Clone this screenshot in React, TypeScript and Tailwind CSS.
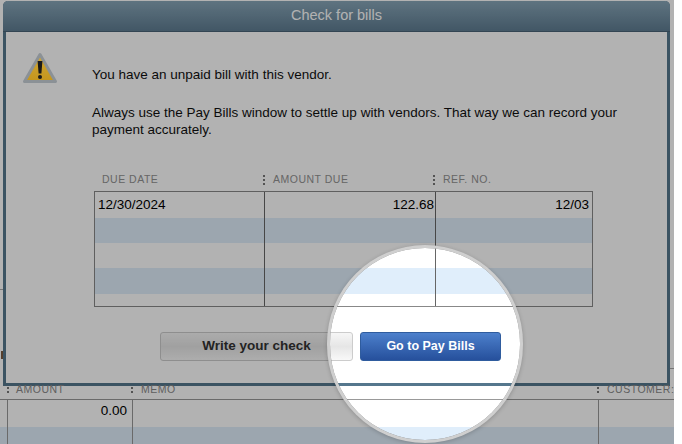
const font = { fontFamily: '"Liberation Sans", Arial, sans-serif' };

function WarningIcon() {
  return (
    <svg width="36" height="34" viewBox="0 0 36 34" className="block relative z-10">
      <defs>
        <linearGradient id="wg" x1="0" y1="0" x2="0" y2="1">
          <stop offset="0" stopColor="#cfa83a" />
          <stop offset="1" stopColor="#c4951c" />
        </linearGradient>
      </defs>
      <path d="M18 2.5 L33.5 29.5 H2.5 Z" fill="url(#wg)" stroke="#8b9196" strokeWidth="3" strokeLinejoin="round" />
      <path d="M15.6 9 h4.8 l-1 12.5 h-2.8 Z" fill="#1a1a1a" />
      <circle cx="18" cy="25" r="2" fill="#1a1a1a" />
    </svg>
  );
}

function Grip() {
  return (
    <span className="flex flex-col gap-[2px] w-[2px] mr-2 shrink-0">
      <i className="block w-[2px] h-[2px] bg-[#777]" />
      <i className="block w-[2px] h-[2px] bg-[#777]" />
      <i className="block w-[2px] h-[2px] bg-[#777]" />
    </span>
  );
}

function BillRow({ h, blue, date, amount, ref_ }: { h: string; blue?: boolean; date?: string; amount?: string; ref_?: string }) {
  return (
    <div className={`grid grid-cols-[170px_171px_1fr] ${h} ${blue ? "bg-[#e0eefb]" : "bg-white"}`}>
      <div className="border-r border-[#666] pl-[3px] pt-[4px] text-[13.5px] leading-[17px] text-black">{date}</div>
      <div className="border-r border-[#666] pr-[1px] pt-[4px] text-right text-[13.5px] leading-[17px] text-black">{amount}</div>
      <div className="pr-[3px] pt-[4px] text-right text-[13.5px] leading-[17px] text-black">{ref_}</div>
    </div>
  );
}

export default function App() {
  return (
    <div className="w-[682px] h-[444px] bg-white overflow-hidden" style={font}>
      <div className="relative w-[674px] h-[444px] overflow-hidden bg-white">
        <div className="ml-[3px] mt-[1px] w-[667px] h-[385px] flex flex-col rounded-t-[5px] border-x-[3px] border-b-[3px] border-[#55778d] bg-white">
          <div className="h-[31px] shrink-0 -mx-[3px] rounded-t-[5px] bg-gradient-to-b from-[#88a6b8] to-[#5f7d92] border-b border-[#4a6478] flex items-center justify-center text-[14.5px] text-white">
            Check for bills
          </div>
          <div className="flex-1 flex flex-col border-t border-white">
            <div className="flex pl-[16px] pt-[19px]">
              <WarningIcon />
              <div className="ml-[34px] pt-[14px] text-[13.5px] leading-[17px] text-[#111] w-[535px]">
                <p>You have an unpaid bill with this vendor.</p>
                <p className="mt-[21px]">
                  Always use the Pay Bills window to settle up with vendors. That way we can record your payment accurately.
                </p>
              </div>
            </div>
            <div className="ml-[88px] w-[499px] mt-[31px]">
              <div className="grid grid-cols-[170px_171px_1fr] h-[22px] items-center text-[10.5px] tracking-[0.5px] text-[#929292]">
                <div className="pl-[8px]">DUE DATE</div>
                <div className="flex items-center -ml-[1px]"><Grip />AMOUNT DUE</div>
                <div className="flex items-center -ml-[2px]"><Grip />REF. NO.</div>
              </div>
              <div className="border border-[#888] bg-white">
                <BillRow h="h-[26px]" date="12/30/2024" amount="122.68" ref_="12/03" />
                <BillRow h="h-[25px]" blue />
                <BillRow h="h-[25px]" />
                <BillRow h="h-[26px]" blue />
                <BillRow h="h-[12px]" />
              </div>
            </div>
            <div className="flex ml-[154px] mt-[25px] gap-[7px]">
              <div className="w-[193px] h-[29px] rounded-[3px] border border-[#ccc] bg-gradient-to-b from-[#f6f6f6] via-[#e6e6e6] to-[#f8f8f8] flex items-center justify-center text-[13.5px] font-bold text-[#333]">
                Write your check
              </div>
              <div className="w-[141px] h-[29px] rounded-[3px] border border-[#2f5c9e] bg-gradient-to-b from-[#4d80cc] to-[#26509c] flex items-center justify-center text-[12.5px] font-bold text-white">
                Go to Pay Bills
              </div>
            </div>
          </div>
        </div>

        <div className="grid grid-cols-[8px_125px_466px_1fr] h-[14px] text-[10.5px] leading-[7px] tracking-[0.5px] text-[#8a8a8a] border-b border-[#999]">
          <div />
          <div className="pl-[8px] flex items-start"><span>AMOUNT</span></div>
          <div className="pl-[8px] flex items-start"><span>MEMO</span></div>
          <div className="pl-[8px] whitespace-nowrap flex items-start"><span>CUSTOMER:</span></div>
        </div>
        <div className="grid grid-cols-[8px_125px_466px_1fr] h-[27px] bg-white">
          <div className="border-r border-[#999]" />
          <div className="border-r border-[#999] text-right pr-[5px] pt-[2px] text-[13.5px] leading-[17px] text-black">0.00</div>
          <div className="border-r border-[#999]" />
          <div />
        </div>
        <div className="grid grid-cols-[8px_125px_466px_1fr] h-[18px] bg-[#e0eefb]">
          <div className="border-r border-[#999]" />
          <div className="border-r border-[#999]" />
          <div className="border-r border-[#999]" />
          <div />
        </div>

        <span className="absolute left-[7px] top-[387px] w-[2px] h-[2px] bg-[#777]" />
        <span className="absolute left-[7px] top-[391px] w-[2px] h-[2px] bg-[#777]" />
        <span className="absolute left-[131px] top-[387px] w-[2px] h-[2px] bg-[#777]" />
        <span className="absolute left-[131px] top-[391px] w-[2px] h-[2px] bg-[#777]" />
        <span className="absolute left-[597px] top-[387px] w-[2px] h-[2px] bg-[#777]" />
        <span className="absolute left-[597px] top-[391px] w-[2px] h-[2px] bg-[#777]" />
        <span className="absolute left-0 top-[289px] w-[3px] h-px bg-[#aaa]" />
        <span className="absolute left-[1px] top-[351px] w-[2px] h-[8px] bg-[#7a5a40]" />
        <span className="absolute left-[670px] top-[368px] w-[4px] h-px bg-[#aaa]" />

        <div className="absolute left-[330px] top-[248px] w-[190px] h-[192px] rounded-full shadow-[0_0_0_3px_#cfcfcf,0_1px_4px_3px_rgba(0,0,0,0.2),0_0_0_1000px_rgba(0,0,0,0.3)]" />
      </div>
    </div>
  );
}
